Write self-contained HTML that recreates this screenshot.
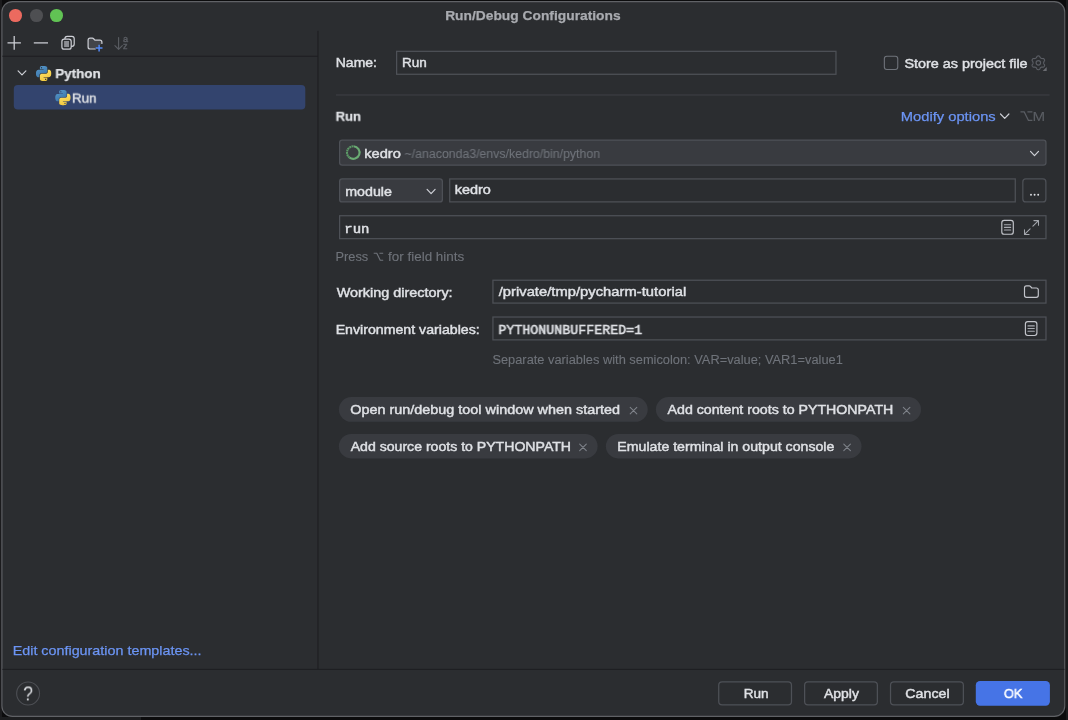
<!DOCTYPE html>
<html><head><meta charset="utf-8">
<style>
*{box-sizing:border-box;margin:0;padding:0}
html,body{width:1068px;height:720px;overflow:hidden;background:#0c0c0d}
body{font-family:"Liberation Sans",sans-serif;font-size:13.5px;color:#dfe1e5;position:relative}
.abs{position:absolute}
#win{position:absolute;left:1.5px;top:1.5px;width:1064px;height:715.2px;background:#2b2d30;border-radius:11px;border:1px solid #5d5f63}
.t{position:absolute;white-space:nowrap;line-height:16px;height:16px;-webkit-text-stroke:0.45px;transform-origin:0 0;will-change:transform}
.hl{position:absolute;height:1px;background:#3a3c41}
.vl{position:absolute;width:1px;background:#3a3c41}
.field{position:absolute;border:1px solid #4e5157;background:#2b2d30}
.combo{position:absolute;border:1px solid #4e5157;background:#393b40;border-radius:3px}
.btn{position:absolute;border:1px solid #4e5157;border-radius:4px}
.chip{position:absolute;border-radius:13px;background:#393b40}
.tl{position:absolute;width:12.6px;height:12.6px;border-radius:50%;top:9.4px}
svg{position:absolute;overflow:visible}
</style></head><body>
<div class="abs" style="left:0;top:0;width:1.5px;height:720px;background:#1b1b1d"></div>
<div class="abs" style="left:1066px;top:0;width:2px;height:720px;background:#1b1b1d"></div>
<svg width="1068" height="720" style="left:0;top:0"><rect x="1.9" y="1.6" width="1062.9" height="714.8" rx="10.5" fill="#2b2d30" stroke="#606266" stroke-width="1.15"/></svg>
<div class="tl" style="left:9.4px;background:#ec6a5f"></div>
<div class="tl" style="left:30px;background:#4e4f52"></div>
<div class="tl" style="left:50.3px;background:#61c354"></div>

<svg width="1068" height="720" style="left:0;top:0"><rect x="2.4" y="55.7" width="315.6" height="1.1" fill="#1e1f22"/><rect x="317.4" y="30.9" width="1.15" height="638.5" fill="#1e1f22"/><rect x="2.4" y="668.85" width="1062" height="1.1" fill="#1e1f22"/></svg>
<svg width="1068" height="720" style="left:0;top:0"><rect x="13.8" y="85.1" width="291.50" height="24.50" rx="4" fill="#33446e"/><rect x="396.62" y="51.33" width="439.35" height="22.95" rx="0" fill="none" stroke="#4e5157" stroke-width="1.25"/><rect x="884.35" y="56.25" width="13.40" height="13.30" rx="2.45" fill="none" stroke="#6f737a" stroke-width="1.1"/><rect x="339.62" y="140.12" width="706.35" height="25.05" rx="2.575" fill="#393b40" stroke="#4e5157" stroke-width="1.25"/><rect x="339.62" y="178.93" width="102.75" height="23.05" rx="2.575" fill="#393b40" stroke="#4e5157" stroke-width="1.25"/><rect x="449.73" y="178.93" width="565.55" height="22.95" rx="0" fill="none" stroke="#4e5157" stroke-width="1.25"/><rect x="1022.83" y="178.93" width="23.05" height="22.95" rx="2.975" fill="none" stroke="#4e5157" stroke-width="1.25"/><rect x="339.62" y="215.72" width="706.35" height="22.95" rx="0" fill="none" stroke="#4e5157" stroke-width="1.25"/><rect x="492.93" y="280.23" width="553.05" height="22.85" rx="0" fill="none" stroke="#4e5157" stroke-width="1.25"/><rect x="492.93" y="317.02" width="553.05" height="22.85" rx="0" fill="none" stroke="#4e5157" stroke-width="1.25"/><rect x="338.9" y="397.0" width="308.80" height="24.80" rx="12.4" fill="#393b40"/><rect x="655.9" y="397.0" width="265.10" height="24.80" rx="12.4" fill="#393b40"/><rect x="338.9" y="433.9" width="258.70" height="24.50" rx="12.25" fill="#393b40"/><rect x="605.9" y="433.9" width="255.60" height="24.50" rx="12.25" fill="#393b40"/><rect x="718.73" y="681.83" width="72.75" height="23.05" rx="3.375" fill="none" stroke="#4e5157" stroke-width="1.25"/><rect x="804.62" y="681.83" width="72.75" height="23.05" rx="3.375" fill="none" stroke="#4e5157" stroke-width="1.25"/><rect x="890.52" y="681.83" width="72.85" height="23.05" rx="3.375" fill="none" stroke="#4e5157" stroke-width="1.25"/><rect x="975.8" y="681.0" width="74.10" height="24.70" rx="4.2" fill="#4674e6"/><rect x="336" y="94.4" width="713.6" height="1.15" fill="#3c3e43"/><rect x="0" y="717" width="141" height="3" fill="#1d1e20"/></svg>
<div class="t" style="left:23.6px;top:686px;font-size:19.5px;color:#dfe1e5;-webkit-text-stroke:0;transform:translate(-0.8px,-0.6px) scaleX(.9)">?</div>
<svg width="1068" height="720" viewBox="0 0 1068 720" style="left:0;top:0" fill="none" stroke-linecap="round" stroke-linejoin="round"><defs><linearGradient id="pb" x1="0" y1="0" x2="0.6" y2="1"><stop offset="0" stop-color="#5b9ed2"/><stop offset="1" stop-color="#3a73a5"/></linearGradient><linearGradient id="pyl" x1="0.3" y1="0" x2="0.7" y2="1"><stop offset="0" stop-color="#ffe267"/><stop offset="1" stop-color="#f0c53a"/></linearGradient></defs><path d="M7.5 42.9 H20.9 M14.2 36.1 V49.7" stroke="#ced0d6" stroke-width="1.25" stroke-linecap="butt"/><path d="M33.8 42.9 H48.0" stroke="#ced0d6" stroke-width="1.25" stroke-linecap="butt"/><rect x="64.9" y="36.3" width="9.3" height="10" rx="2.3" stroke="#ced0d6" stroke-width="1.2"/><rect x="61.9" y="39.2" width="9.3" height="10" rx="2.3" stroke="#ced0d6" stroke-width="1.2" fill="#2b2d30"/><rect x="64.1" y="41" width="4.9" height="6" fill="#8b8d93" stroke="none"/><path d="M95.2 49 H90.1 a2 2 0 0 1 -2 -2 V40.2 a2 2 0 0 1 2 -2 H92.4 a1.6 1.6 0 0 1 1.2 .55 L94.9 40.2 H99.9 a2 2 0 0 1 2 2 V43.4" stroke="#ced0d6" stroke-width="1.2" fill="#43454a"/><path d="M95.7 48.1 H102.5 M99.1 44.7 V51.5" stroke="#548af7" stroke-width="1.5" stroke-linecap="butt"/><path d="M118.6 37.6 V49.2 M114.9 45.6 L118.6 49.3 L122.3 45.6" stroke="#5a5d63" stroke-width="1.1"/><path d="M18.10 70.95 L22.00 74.85 L25.90 70.95" stroke="#ced0d6" stroke-width="1.2"/><g transform="translate(36,65.9) scale(0.6333)"><path fill="url(#pb)" fill-rule="evenodd" d="M14.25.18l.9.2.73.26.59.3.45.32.34.34.25.34.16.33.1.3.04.26.02.2-.01.13V8.5l-.05.63-.13.55-.21.46-.26.38-.3.31-.33.25-.35.19-.35.14-.33.1-.3.07-.26.04-.21.02H8.77l-.69.05-.59.14-.5.22-.41.27-.33.32-.27.35-.2.36-.15.37-.1.35-.07.32-.04.27-.02.21v3.06H3.17l-.21-.03-.28-.07-.32-.12-.35-.18-.36-.26-.36-.36-.35-.46-.32-.59-.28-.73-.21-.88-.14-1.05-.05-1.23.06-1.22.16-1.04.24-.87.32-.71.36-.57.4-.44.42-.33.42-.24.4-.16.36-.1.32-.05.24-.01h.16l.06.01h8.16v-.83H6.18l-.01-2.75-.02-.37.05-.34.11-.31.17-.28.25-.26.31-.23.38-.2.44-.18.51-.15.58-.12.64-.1.71-.06.77-.04.84-.02 1.27.05zm-6.3 1.98l-.23.33-.08.41.08.41.23.34.33.22.41.09.41-.09.33-.22.23-.34.08-.41-.08-.41-.23-.33-.33-.22-.41-.09-.41.09z"/><path fill="url(#pyl)" fill-rule="evenodd" d="M21.04 6.11l.28.06.32.12.35.18.36.27.36.35.35.47.32.59.28.73.21.88.14 1.04.05 1.23-.06 1.23-.16 1.04-.24.86-.32.71-.36.57-.4.45-.42.33-.42.24-.4.16-.36.09-.32.05-.24.02-.16-.01h-8.22v.82h5.84l.01 2.76.02.36-.05.34-.11.31-.17.29-.25.25-.31.24-.38.2-.44.17-.51.15-.58.13-.64.09-.71.07-.77.04-.84.01-1.27-.04-1.07-.14-.9-.2-.73-.25-.59-.3-.45-.33-.34-.34-.25-.34-.16-.33-.1-.3-.04-.25-.02-.2.01-.13v-5.34l.05-.64.13-.54.21-.46.26-.38.3-.32.33-.24.35-.2.35-.14.33-.1.3-.06.26-.04.21-.02.13-.01h5.84l.69-.05.59-.14.5-.21.41-.28.33-.32.27-.35.2-.36.15-.36.1-.35.07-.32.04-.28.02-.21V6.07h2.09l.14.01zm-6.47 14.25l-.23.33-.08.41.08.41.23.33.33.23.41.08.41-.08.33-.23.23-.33.08-.41-.08-.41-.23-.33-.33-.23-.41-.08-.41.08z"/></g><g transform="translate(55.3,90) scale(0.6333)"><path fill="url(#pb)" fill-rule="evenodd" d="M14.25.18l.9.2.73.26.59.3.45.32.34.34.25.34.16.33.1.3.04.26.02.2-.01.13V8.5l-.05.63-.13.55-.21.46-.26.38-.3.31-.33.25-.35.19-.35.14-.33.1-.3.07-.26.04-.21.02H8.77l-.69.05-.59.14-.5.22-.41.27-.33.32-.27.35-.2.36-.15.37-.1.35-.07.32-.04.27-.02.21v3.06H3.17l-.21-.03-.28-.07-.32-.12-.35-.18-.36-.26-.36-.36-.35-.46-.32-.59-.28-.73-.21-.88-.14-1.05-.05-1.23.06-1.22.16-1.04.24-.87.32-.71.36-.57.4-.44.42-.33.42-.24.4-.16.36-.1.32-.05.24-.01h.16l.06.01h8.16v-.83H6.18l-.01-2.75-.02-.37.05-.34.11-.31.17-.28.25-.26.31-.23.38-.2.44-.18.51-.15.58-.12.64-.1.71-.06.77-.04.84-.02 1.27.05zm-6.3 1.98l-.23.33-.08.41.08.41.23.34.33.22.41.09.41-.09.33-.22.23-.34.08-.41-.08-.41-.23-.33-.33-.22-.41-.09-.41.09z"/><path fill="url(#pyl)" fill-rule="evenodd" d="M21.04 6.11l.28.06.32.12.35.18.36.27.36.35.35.47.32.59.28.73.21.88.14 1.04.05 1.23-.06 1.23-.16 1.04-.24.86-.32.71-.36.57-.4.45-.42.33-.42.24-.4.16-.36.09-.32.05-.24.02-.16-.01h-8.22v.82h5.84l.01 2.76.02.36-.05.34-.11.31-.17.29-.25.25-.31.24-.38.2-.44.17-.51.15-.58.13-.64.09-.71.07-.77.04-.84.01-1.27-.04-1.07-.14-.9-.2-.73-.25-.59-.3-.45-.33-.34-.34-.25-.34-.16-.33-.1-.3-.04-.25-.02-.2.01-.13v-5.34l.05-.64.13-.54.21-.46.26-.38.3-.32.33-.24.35-.2.35-.14.33-.1.3-.06.26-.04.21-.02.13-.01h5.84l.69-.05.59-.14.5-.21.41-.28.33-.32.27-.35.2-.36.15-.36.1-.35.07-.32.04-.28.02-.21V6.07h2.09l.14.01zm-6.47 14.25l-.23.33-.08.41.08.41.23.33.33.23.41.08.41-.08.33-.23.23-.33.08-.41-.08-.41-.23-.33-.33-.23-.41-.08-.41.08z"/></g><path d="M1000.50 114.00 L1004.70 118.30 L1008.90 114.00" stroke="#ced0d6" stroke-width="1.2"/><path d="M1038.35 55.90 L1038.71 55.93 L1039.06 56.03 L1039.40 56.20 L1039.70 56.45 L1039.93 56.91 L1040.11 57.37 L1040.33 57.65 L1040.54 57.87 L1040.77 58.06 L1041.00 58.21 L1041.25 58.34 L1041.52 58.43 L1041.82 58.51 L1042.17 58.56 L1042.66 58.49 L1043.18 58.45 L1043.54 58.60 L1043.85 58.80 L1044.12 59.05 L1044.33 59.35 L1044.48 59.68 L1044.57 60.03 L1044.59 60.41 L1044.53 60.79 L1044.24 61.22 L1043.93 61.61 L1043.80 61.94 L1043.72 62.24 L1043.67 62.52 L1043.65 62.80 L1043.67 63.08 L1043.72 63.36 L1043.80 63.66 L1043.93 63.99 L1044.24 64.38 L1044.53 64.81 L1044.59 65.19 L1044.57 65.57 L1044.48 65.92 L1044.33 66.25 L1044.12 66.55 L1043.85 66.80 L1043.54 67.00 L1043.18 67.15 L1042.66 67.11 L1042.17 67.04 L1041.82 67.09 L1041.52 67.17 L1041.25 67.26 L1041.00 67.39 L1040.77 67.54 L1040.54 67.73 L1040.33 67.95 L1040.11 68.23 L1039.93 68.69 L1039.70 69.15 L1039.40 69.40 L1039.06 69.57 L1038.71 69.67 L1038.35 69.70 L1037.99 69.67 L1037.64 69.57 L1037.30 69.40 L1037.00 69.15 L1036.77 68.69 L1036.59 68.23 L1036.37 67.95 L1036.16 67.73 L1035.93 67.54 L1035.70 67.39 L1035.45 67.26 L1035.18 67.17 L1034.88 67.09 L1034.53 67.04 L1034.04 67.11 L1033.52 67.15 L1033.16 67.00 L1032.85 66.80 L1032.58 66.55 L1032.37 66.25 L1032.22 65.92 L1032.13 65.57 L1032.11 65.19 L1032.17 64.81 L1032.46 64.38 L1032.77 63.99 L1032.90 63.66 L1032.98 63.36 L1033.03 63.08 L1033.05 62.80 L1033.03 62.52 L1032.98 62.24 L1032.90 61.94 L1032.77 61.61 L1032.46 61.22 L1032.17 60.79 L1032.11 60.41 L1032.13 60.03 L1032.22 59.68 L1032.37 59.35 L1032.58 59.05 L1032.85 58.80 L1033.16 58.60 L1033.52 58.45 L1034.04 58.49 L1034.53 58.56 L1034.88 58.51 L1035.18 58.43 L1035.45 58.34 L1035.70 58.21 L1035.93 58.06 L1036.16 57.87 L1036.37 57.65 L1036.59 57.37 L1036.77 56.91 L1037.00 56.45 L1037.30 56.20 L1037.64 56.03 L1037.99 55.93Z" stroke="#5a5d63" stroke-width="1.15"/><circle cx="1038.35" cy="62.8" r="2.25" stroke="#5a5d63" stroke-width="1.15"/><path d="M1042.7 70.9 H1046.7 V66.9 Z" fill="#6a6c71" stroke="none"/><path d="M1020.5 111.9 H1024.2 L1028.4 120.3 H1032.4 M1027.4 111.9 H1032.4" stroke="#5a5d63" stroke-width="1.2" stroke-linecap="butt" stroke-linejoin="miter"/><path d="M373.7 253.2 H376.8 L380.2 260.2 H383.2 M379.4 253.2 H383.2" stroke="#6f737a" stroke-width="1.15" stroke-linecap="butt" stroke-linejoin="miter"/><path d="M353.6 146.3 A6.3 6.3 0 1 1 349.6 157.7" stroke="#6aab73" stroke-width="2.1" stroke-linecap="butt"/><path d="M349.6 157.7 A6.3 6.3 0 0 1 353.6 146.3" stroke="#5c9a66" stroke-width="2.1" stroke-linecap="butt" stroke-dasharray="1.8 0.5"/><path d="M1030.50 151.40 L1034.50 155.60 L1038.50 151.40" stroke="#ced0d6" stroke-width="1.2"/><path d="M427.10 189.40 L431.10 193.60 L435.10 189.40" stroke="#ced0d6" stroke-width="1.2"/><circle cx="1031.0" cy="194.7" r="0.95" fill="#dfe1e5" stroke="none"/><circle cx="1034.6" cy="194.7" r="0.95" fill="#dfe1e5" stroke="none"/><circle cx="1038.2" cy="194.7" r="0.95" fill="#dfe1e5" stroke="none"/><rect x="1001.8" y="220.4" width="11.5" height="13.9" rx="2.4" fill="none" stroke="#c3c5cb" stroke-width="1.15"/><path d="M1004.40 224.70 H1010.70" stroke="#a9acb2" stroke-width="1.1" fill="none"/><path d="M1004.40 227.35 H1010.70" stroke="#a9acb2" stroke-width="1.1" fill="none"/><path d="M1004.40 230.00 H1010.70" stroke="#a9acb2" stroke-width="1.1" fill="none"/><path d="M1038.5 220.6 L1032.9 226.1 M1030.1 228.9 L1024.5 234.4 M1033.9 220.6 H1038.5 V225.2 M1024.5 229.8 V234.4 H1029.1" stroke="#a4a7ad" stroke-width="1.05"/><path d="M1026.5 285.9 H1029.2 a1.6 1.6 0 0 1 1.2 .55 L1031.8 288 H1036.3 a2 2 0 0 1 2 2 V295.3 a2 2 0 0 1 -2 2 H1026.5 a2 2 0 0 1 -2 -2 V287.9 a2 2 0 0 1 2 -2Z" stroke="#c3c5cb" stroke-width="1.15"/><rect x="1025.4" y="321.6" width="11.5" height="13.9" rx="2.4" fill="none" stroke="#c3c5cb" stroke-width="1.15"/><path d="M1028.00 325.90 H1034.30" stroke="#a9acb2" stroke-width="1.1" fill="none"/><path d="M1028.00 328.55 H1034.30" stroke="#a9acb2" stroke-width="1.1" fill="none"/><path d="M1028.00 331.20 H1034.30" stroke="#a9acb2" stroke-width="1.1" fill="none"/><circle cx="28.1" cy="693.5" r="11.45" stroke="#4d4f54" stroke-width="1.1"/><path d="M630.20 407.30 L636.80 413.90 M636.80 407.30 L630.20 413.90" stroke="#7f838a" stroke-width="1.05"/><path d="M903.30 407.30 L909.90 413.90 M909.90 407.30 L903.30 413.90" stroke="#7f838a" stroke-width="1.05"/><path d="M579.70 444.10 L586.30 450.70 M586.30 444.10 L579.70 450.70" stroke="#7f838a" stroke-width="1.05"/><path d="M843.80 444.10 L850.40 450.70 M850.40 444.10 L843.80 450.70" stroke="#7f838a" stroke-width="1.05"/></svg>
<div class="t" style="left:122.6px;top:31px;font-size:9px;color:#5a5d63">a</div>
<div class="t" style="left:123px;top:38px;font-size:9px;color:#5a5d63">z</div>
<div class="t" style="left:445px;top:8px;font-size:13.5px;letter-spacing:0.000px;transform:translate(0.16px,0.00px) scaleX(1.0218);font-weight:bold;color:#a9abb0;-webkit-text-stroke:0.25px">Run/Debug Configurations</div>
<div class="t" style="left:55px;top:66px;font-size:13.5px;letter-spacing:0.000px;transform:translate(0.28px,0.00px) scaleX(0.9935);font-weight:bold;-webkit-text-stroke:0.25px">Python</div>
<div class="t" style="left:72px;top:90px;font-size:13.5px;letter-spacing:0.000px;transform:translate(-0.04px,0.60px) scaleX(0.9890);">Run</div>
<div class="t" style="left:13px;top:643px;font-size:13.5px;letter-spacing:0.000px;transform:translate(-0.31px,0.00px) scaleX(1.0617);color:#6c95f5;-webkit-text-stroke:0.25px">Edit configuration templates...</div>
<div class="t" style="left:336px;top:54px;font-size:13.5px;letter-spacing:0.000px;transform:translate(-0.24px,0.70px) scaleX(1.0362);">Name:</div>
<div class="t" style="left:402px;top:54px;font-size:13.5px;letter-spacing:0.000px;transform:translate(0.00px,0.50px) scaleX(1.0000);">Run</div>
<div class="t" style="left:904px;top:56px;font-size:13.5px;letter-spacing:0.000px;transform:translate(0.42px,0.00px) scaleX(1.0659);">Store as project file</div>
<div class="t" style="left:335px;top:108px;font-size:13.5px;letter-spacing:0.000px;transform:translate(0.68px,0.70px) scaleX(0.9613);font-weight:bold;-webkit-text-stroke:0.25px">Run</div>
<div class="t" style="left:901px;top:109px;font-size:13.5px;letter-spacing:0.007px;transform:translate(-0.25px,0.00px) scaleX(1.0900);color:#6c95f5;-webkit-text-stroke:0.25px">Modify options</div>
<div class="t" style="left:1033px;top:109px;font-size:13.5px;letter-spacing:0.000px;transform:translate(-0.48px,0.00px) scaleX(1.1244);color:#5a5d63;-webkit-text-stroke:0.1px">M</div>
<div class="t" style="left:364px;top:146px;font-size:13.5px;letter-spacing:0.000px;transform:translate(0.17px,0.00px) scaleX(1.0860);">kedro</div>
<div class="t" style="left:404px;top:146px;font-size:12.5px;letter-spacing:0.000px;transform:translate(0.56px,0.00px) scaleX(0.9851);color:#6f737a;-webkit-text-stroke:0.1px">~/anaconda3/envs/kedro/bin/python</div>
<div class="t" style="left:345px;top:184px;font-size:13.5px;letter-spacing:0.000px;transform:translate(0.18px,0.00px) scaleX(1.0555);">module</div>
<div class="t" style="left:454px;top:182px;font-size:13.5px;letter-spacing:0.000px;transform:translate(0.66px,0.40px) scaleX(1.0710);">kedro</div>
<div class="t" style="left:345px;top:222px;font-size:13.33px;letter-spacing:0.000px;transform:translate(-0.64px,0.00px) scaleX(1.0476);font-family:'Liberation Mono',monospace;-webkit-text-stroke:0.5px">run</div>
<div class="t" style="left:336px;top:249px;font-size:12.5px;letter-spacing:0.000px;transform:translate(-0.52px,0.00px) scaleX(1.0257);color:#6f737a;-webkit-text-stroke:0.1px">Press</div>
<div class="t" style="left:387px;top:249px;font-size:12.5px;letter-spacing:0.000px;transform:translate(0.98px,0.00px) scaleX(1.0768);color:#6f737a;-webkit-text-stroke:0.1px">for field hints</div>
<div class="t" style="left:336px;top:285px;font-size:13.5px;letter-spacing:0.000px;transform:translate(0.63px,0.00px) scaleX(1.0686);">Working directory:</div>
<div class="t" style="left:498px;top:284px;font-size:13.5px;letter-spacing:0.036px;transform:translate(0.63px,0.00px) scaleX(1.0900);">/private/tmp/pycharm-tutorial</div>
<div class="t" style="left:336px;top:322px;font-size:13.5px;letter-spacing:0.000px;transform:translate(-0.34px,0.00px) scaleX(1.0493);">Environment variables:</div>
<div class="t" style="left:498px;top:323px;font-size:13.33px;letter-spacing:0.000px;transform:translate(0.36px,0.00px) scaleX(0.9986);font-family:'Liberation Mono',monospace;-webkit-text-stroke:0.5px">PYTHONUNBUFFERED=1</div>
<div class="t" style="left:492px;top:352px;font-size:12.5px;letter-spacing:0.000px;transform:translate(0.40px,0.00px) scaleX(1.0264);color:#6f737a;-webkit-text-stroke:0.1px">Separate variables with semicolon: VAR=value; VAR1=value1</div>
<div class="t" style="left:350px;top:402px;font-size:13.5px;letter-spacing:0.000px;transform:translate(0.29px,0.30px) scaleX(1.0662);">Open run/debug tool window when started</div>
<div class="t" style="left:667px;top:402px;font-size:13.5px;letter-spacing:0.000px;transform:translate(0.54px,0.00px) scaleX(1.0509);">Add content roots to PYTHONPATH</div>
<div class="t" style="left:349px;top:439px;font-size:13.5px;letter-spacing:0.000px;transform:translate(1.67px,0.00px) scaleX(1.0440);">Add source roots to PYTHONPATH</div>
<div class="t" style="left:617px;top:439px;font-size:13.5px;letter-spacing:0.000px;transform:translate(0.36px,0.00px) scaleX(1.0478);">Emulate terminal in output console</div>
<div class="t" style="left:744px;top:686px;font-size:13.5px;letter-spacing:0.000px;transform:translate(-0.34px,0.00px) scaleX(1.0062);">Run</div>
<div class="t" style="left:823px;top:686px;font-size:13.5px;letter-spacing:0.000px;transform:translate(1.03px,0.00px) scaleX(1.0321);">Apply</div>
<div class="t" style="left:905px;top:686px;font-size:13.5px;letter-spacing:0.000px;transform:translate(0.37px,0.00px) scaleX(1.0516);">Cancel</div>
<div class="t" style="left:1003px;top:686px;font-size:13.5px;letter-spacing:0.000px;transform:translate(0.89px,0.00px) scaleX(0.9531);color:#fff">OK</div>
</body></html>
